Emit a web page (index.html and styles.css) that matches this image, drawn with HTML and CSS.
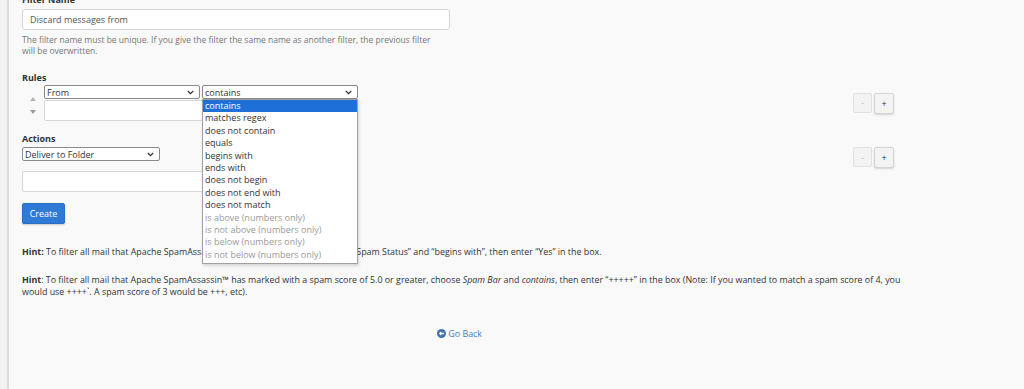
FILE: index.html
```html
<!DOCTYPE html>
<html lang="en">
<head>
    <meta charset="UTF-8">
    <title>Create a New Filter</title>
    <link rel="stylesheet" href="styles.css">
</head>
<body>
    <div class="sidebar"></div>
    <div class="main">
        <div class="field">
            <label class="label first">Filter Name</label>
            <input class="text-input name-input" type="text" value="Discard messages from">
            <p class="help">The filter name must be unique. If you give the filter the same name as another filter, the previous filter will be overwritten.</p>
        </div>

        <div class="section rules">
            <label class="label">Rules</label>
            <div class="rule-row">
                <div class="sorter">
                    <svg width="6" height="4" viewBox="0 0 6 4"><path d="M0 4 L3 0 L6 4 Z" fill="#b5b5b5"/></svg>
                    <svg width="6" height="4" viewBox="0 0 6 4"><path d="M0 0 L3 4 L6 0 Z" fill="#9a9a9a"/></svg>
                </div>
                <div class="rule-fields">
                    <div class="select-pair">
                        <div class="select part-select">
                            <span>From</span>
                            <svg width="7" height="5" viewBox="0 0 7 5"><path d="M0.8 1 L3.5 3.7 L6.2 1" fill="none" stroke="#333" stroke-width="1.2"/></svg>
                        </div>
                        <div class="combo">
                            <div class="select match-select">
                                <span>contains</span>
                                <svg width="7" height="5" viewBox="0 0 7 5"><path d="M0.8 1 L3.5 3.7 L6.2 1" fill="none" stroke="#333" stroke-width="1.2"/></svg>
                            </div>
                            <ul class="dropdown">
                                <li class="active">contains</li>
                                <li>matches regex</li>
                                <li>does not contain</li>
                                <li>equals</li>
                                <li>begins with</li>
                                <li>ends with</li>
                                <li>does not begin</li>
                                <li>does not end with</li>
                                <li>does not match</li>
                                <li class="disabled">is above (numbers only)</li>
                                <li class="disabled">is not above (numbers only)</li>
                                <li class="disabled">is below (numbers only)</li>
                                <li class="disabled">is not below (numbers only)</li>
                            </ul>
                        </div>
                    </div>
                    <textarea class="text-input rule-value"></textarea>
                </div>
                <div class="btn-pair">
                    <button class="small-btn minus">-</button>
                    <button class="small-btn plus">+</button>
                </div>
            </div>
        </div>

        <div class="section actions">
            <label class="label">Actions</label>
            <div class="action-row">
                <div class="select action-select">
                    <span>Deliver to Folder</span>
                    <svg width="7" height="5" viewBox="0 0 7 5"><path d="M0.8 1 L3.5 3.7 L6.2 1" fill="none" stroke="#333" stroke-width="1.2"/></svg>
                </div>
                <div class="btn-pair">
                    <button class="small-btn minus">-</button>
                    <button class="small-btn plus">+</button>
                </div>
            </div>
            <input class="text-input action-value" type="text">
        </div>

        <button class="btn-primary">Create</button>

        <p class="hint first-hint"><b>Hint:</b> To filter all mail that Apache SpamAssassin™ has marked as spam, choose “Spam Status” and “begins with”, then enter “Yes” in the box.</p>
        <p class="hint">
            <b>Hint</b>: To filter all mail that Apache SpamAssassin™ has marked with a spam score of 5.0 or greater, choose <i>Spam Bar</i> and <i>contains</i>, then enter “+++++” in the box (Note: If you wanted to match a spam score of 4, you would use ++++`. A spam score of 3 would be +++, etc).
        </p>

        <div class="back">
            <a href="#" class="back-link">
                <svg width="9" height="9" viewBox="0 0 16 16"><circle cx="8" cy="8" r="8" fill="#3f74ad"/><path d="M3.5 8 L7.5 4.2 L7.5 6.6 L12.3 6.6 L12.3 9.4 L7.5 9.4 L7.5 11.8 Z" fill="#fff"/></svg>
                Go Back
            </a>
        </div>
    </div>
</body>
</html>
```

FILE: styles.css
```css
body {
    margin: 0;
    font-family: "Open Sans", "Noto Sans", sans-serif;
    font-size: 9px;
    color: #333;
    background-color: #f9f9f9;
    display: flex;
    min-height: 389px;
    overflow: hidden;
}
.sidebar {
    width: 7px;
    flex-shrink: 0;
    background-color: #f2f2f2;
    border-right: 2px solid #dedede;
}
.main {
    flex: 1;
    padding: 0 0 0 13px;
    max-width: 885px;
}
.label {
    display: block;
    font-weight: bold;
    font-size: 9px;
    line-height: 12px;
    color: #333;
    margin-bottom: 2px;
}
.label.first {
    margin-top: -6px;
    margin-bottom: 3px;
}
.text-input {
    box-sizing: border-box;
    display: block;
    font-family: inherit;
    font-size: 9px;
    color: #555;
    background-color: #fff;
    border: 1px solid #d6d6d6;
    border-radius: 3px;
    margin: 0;
}
.name-input {
    width: 428px;
    height: 21px;
    padding: 0 7px;
}
.help {
    margin: 4px 0 0;
    width: 421px;
    font-size: 8.5px;
    line-height: 11px;
    color: #777;
}
.section.rules {
    margin-top: 16px;
}
.section.rules .label {
    margin-bottom: 1px;
}
.section.actions {
    margin-top: 12px;
}
.rule-row {
    display: flex;
    align-items: center;
}
.sorter {
    width: 22px;
    display: flex;
    flex-direction: column;
    align-items: center;
    gap: 9px;
    padding-top: 5px;
}
.sorter svg {
    display: block;
}
.rule-fields {
    width: 314px;
}
.select-pair {
    display: flex;
    gap: 2px;
}
.select {
    box-sizing: border-box;
    height: 14px;
    display: flex;
    align-items: center;
    justify-content: space-between;
    font-size: 9px;
    color: #333;
    background-color: #fff;
    border: 1px solid #8a8a8a;
    border-radius: 2px;
    padding: 0 5px 0 2px;
}
.select svg {
    display: block;
}
.part-select {
    width: 156px;
}
.combo {
    position: relative;
}
.match-select {
    width: 156px;
}
.dropdown {
    position: absolute;
    top: 14px;
    left: 0;
    width: 156px;
    box-sizing: border-box;
    margin: 0;
    padding: 0 0 2px;
    list-style: none;
    background-color: #fff;
    border: 1px solid #a0a0a0;
    box-shadow: 1px 2px 3px rgba(0, 0, 0, 0.15);
    z-index: 5;
}
.dropdown li {
    height: 12.4px;
    line-height: 12.4px;
    padding-left: 2px;
    font-size: 9px;
    color: #333;
    white-space: nowrap;
}
.dropdown li.active {
    background-color: #1f6fd8;
    color: #fff;
}
.dropdown li.disabled {
    color: #9a9a9a;
}
.rule-value {
    width: 314px;
    height: 21px;
    margin-top: 1px;
    resize: none;
    border-radius: 2px;
}
.btn-pair {
    display: flex;
    align-items: flex-start;
    gap: 2px;
    margin-left: auto;
    margin-right: 13px;
}
.small-btn {
    box-sizing: border-box;
    font-family: inherit;
    font-size: 9px;
    padding: 0;
    border-radius: 2px;
    background-color: #f3f3f3;
    cursor: pointer;
}
.small-btn.minus {
    width: 19px;
    height: 20px;
    color: #bbb;
    border: 1px solid #e1e1e1;
}
.small-btn.plus {
    width: 20px;
    height: 21px;
    color: #333;
    border: 1px solid #d4d4d4;
    box-shadow: 0 1px 2px rgba(0, 0, 0, 0.15);
}
.action-row {
    display: flex;
    align-items: flex-start;
}
.action-select {
    width: 138px;
}
.action-value {
    width: 314px;
    height: 21px;
    margin-top: 3px;
    border-radius: 2px;
}
.btn-primary {
    display: block;
    margin-top: 11px;
    width: 43px;
    height: 21px;
    padding: 0;
    font-family: inherit;
    font-size: 9px;
    color: #fff;
    background-color: #2f7ad6;
    border: 1px solid #2a6fc4;
    border-radius: 2px;
    box-shadow: 0 1px 2px rgba(0, 0, 0, 0.2);
}
.hint {
    margin: 16px 0 0;
    font-size: 8.9px;
    line-height: 12px;
    color: #333;
}
.hint.first-hint {
    margin-top: 22px;
}
.back {
    text-align: center;
    margin-top: 29px;
    padding-right: 10px;
}
.back-link {
    color: #4f7fb3;
    text-decoration: none;
    font-size: 8.9px;
}
.back-link svg {
    vertical-align: -1px;
}
```
